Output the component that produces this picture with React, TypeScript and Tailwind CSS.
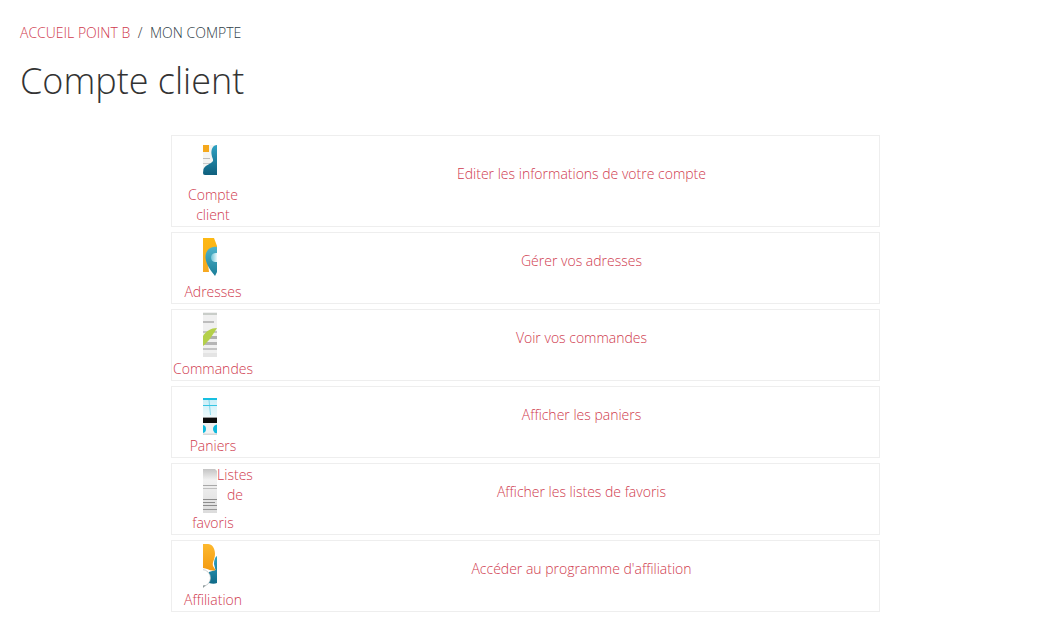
import React from 'react'

// icons are sliced to 14px wide in the page, same as the original 48px images
const IconCompte = () => (
  <svg width="14" height="48" viewBox="0 0 14 48">
    <defs>
      <linearGradient id="teal1" x1="0" y1="0" x2="0" y2="1">
        <stop offset="0" stopColor="#2fa3c4" />
        <stop offset="1" stopColor="#0f5f7d" />
      </linearGradient>
    </defs>
    <rect x="0" y="8" width="14" height="30" fill="#f4f4f2" />
    <rect x="0" y="8" width="6" height="7" fill="#f5a81c" />
    <rect x="0" y="21" width="7" height="1" fill="#bdbdbd" />
    <rect x="0" y="26" width="7" height="1" fill="#c9c9c9" />
    <path d="M14 8 C10 8 8 12 8.500 17 C9 21 10.500 22 10 24 C8 27 2 28 0.500 32 L0 36 Q0 38 2 38 H14 Z" fill="url(#teal1)" />
  </svg>
)

const IconAdresses = () => (
  <svg width="14" height="48" viewBox="0 0 14 48">
    <defs>
      <linearGradient id="or2" x1="0" y1="0" x2="0" y2="1">
        <stop offset="0" stopColor="#fdb913" />
        <stop offset="1" stopColor="#f6a821" />
      </linearGradient>
      <linearGradient id="teal2" x1="0" y1="0" x2="0" y2="1">
        <stop offset="0" stopColor="#4fb4cb" />
        <stop offset="1" stopColor="#1a7d98" />
      </linearGradient>
      <linearGradient id="glow2" x1="0" y1="0" x2="1" y2="0">
        <stop offset="0" stopColor="#6cc3d6" />
        <stop offset="1" stopColor="#e8f8fb" />
      </linearGradient>
    </defs>
    <path d="M0 4 H11 L14 12 V14 H8 L4 22 L6 38 H0 Z" fill="url(#or2)" />
    <path d="M14 13 C7 12 2 17 2.500 24 C3 31 9 38 12 42 L14 38 Z" fill="url(#teal2)" />
    <path d="M14 19 C11 18.500 8 20 8 23.500 C8 27 11 28.500 14 28 Z" fill="url(#glow2)" />
  </svg>
)

const IconCommandes = () => (
  <svg width="14" height="48" viewBox="0 0 14 48">
    <rect x="0" y="1" width="14" height="45" fill="#f0f0f0" />
    <rect x="0" y="2" width="14" height="2" fill="#c9cdc9" />
    <rect x="0" y="10" width="11" height="2" fill="#bdbdbd" />
    <rect x="0" y="20" width="14" height="2" fill="#c4c4c4" />
    <rect x="0" y="25" width="14" height="3" fill="#b0b0b0" />
    <rect x="0" y="31" width="14" height="3" fill="#b5b5b5" />
    <rect x="0" y="37" width="14" height="2" fill="#c4c4c4" />
    <rect x="0" y="42" width="14" height="4" fill="#e4e4e4" />
    <path d="M14 17 C8 17 3 20 0 25 V35 C4 32 8 27 14 17 Z" fill="#b4d04a" />
  </svg>
)

const IconPaniers = () => (
  <svg width="14" height="48" viewBox="0 0 14 48">
    <defs>
      <linearGradient id="blue4" x1="0" y1="0" x2="0" y2="1">
        <stop offset="0" stopColor="#c6eef8" />
        <stop offset="1" stopColor="#eef9fb" />
      </linearGradient>
    </defs>
    <rect x="0" y="10" width="14" height="19" fill="url(#blue4)" />
    <rect x="0" y="10" width="14" height="2" fill="#18bfe0" />
    <rect x="0" y="17" width="14" height="1" fill="#35c5e3" />
    <path d="M6 12 L7.500 27" stroke="#45c5e0" strokeWidth="0.6" />
    <rect x="0" y="29" width="14" height="1" fill="#9a9a9a" />
    <rect x="0" y="30" width="14" height="5" fill="#0c0c0c" />
    <rect x="0" y="35" width="14" height="12" fill="#f2f2f2" />
    <circle cx="-1" cy="41" r="4" fill="#10b9dc" />
    <circle cx="14.500" cy="41" r="4.500" fill="#10b9dc" />
    <rect x="0" y="45.500" width="14" height="1.500" fill="#d8d8d8" />
  </svg>
)

const IconListes = () => (
  <svg width="14" height="48" viewBox="0 0 14 48">
    <defs>
      <linearGradient id="gray5" x1="0" y1="0" x2="0" y2="1">
        <stop offset="0" stopColor="#c4c4c4" />
        <stop offset="0.25" stopColor="#f2f2f2" />
        <stop offset="1" stopColor="#dcdcdc" />
      </linearGradient>
    </defs>
    <path d="M0 4 H12 L14 6 V48 H0 Z" fill="url(#gray5)" />
    <rect x="0" y="20" width="14" height="1" fill="#a8a8a8" />
    <rect x="0" y="23" width="14" height="1" fill="#c0c0c0" />
    <rect x="0" y="34" width="14" height="1" fill="#8c8c8c" />
    <rect x="0" y="37" width="12" height="1" fill="#8c8c8c" />
    <rect x="0" y="40" width="14" height="1" fill="#8c8c8c" />
    <rect x="0" y="44" width="14" height="1" fill="#999999" />
  </svg>
)

const IconAffiliation = () => (
  <svg width="14" height="48" viewBox="0 0 14 48">
    <defs>
      <linearGradient id="teal6" x1="0" y1="0" x2="0" y2="1">
        <stop offset="0" stopColor="#2fa3c4" />
        <stop offset="1" stopColor="#0f6a88" />
      </linearGradient>
      <linearGradient id="or6" x1="0" y1="0" x2="0" y2="1">
        <stop offset="0" stopColor="#fdb92e" />
        <stop offset="1" stopColor="#f39a10" />
      </linearGradient>
    </defs>
    <path d="M14 14 C12 15 11 18 11 22 L12.500 28 L6 30 L6 41 C9 42 12 42 14 41 Z" fill="url(#teal6)" />
    <path d="M0 2 H5 C9 2 12 6 12 12 C12 17 9 20 10 24 L12.500 28 C8 30 4 26 0 26 Z" fill="url(#or6)" />
    <circle cx="-1" cy="36" r="8.500" fill="#ffffff" stroke="#aab4b6" strokeWidth="0.6" />
    <path d="M0 43.500 L3 43 L0 46 Z" fill="#8f9a9c" />
  </svg>
)

const rows = [
  { label: 'Compte client', link: 'Editer les informations de votre compte', icon: <IconCompte /> },
  { label: 'Adresses', link: 'Gérer vos adresses', icon: <IconAdresses /> },
  { label: 'Commandes', link: 'Voir vos commandes', icon: <IconCommandes /> },
  { label: 'Paniers', link: 'Afficher les paniers', icon: <IconPaniers /> },
  { label: 'Listes de favoris', link: 'Afficher les listes de favoris', icon: <IconListes /> },
  { label: 'Affiliation', link: "Accéder au programme d'affiliation", icon: <IconAffiliation /> },
]

export default function App() {
  return (
    <div className="min-h-[623px] bg-white font-['Open_Sans',sans-serif] font-light text-sm leading-5 text-[#333]">
      <div className="px-5 pt-[23px]">
        <div className="uppercase">
          <a className="text-[#cf3a4e]">Accueil Point B</a>
          <span className="mx-[7.5px]">/</span>
          <span className="text-[#2f3d47]">Mon compte</span>
        </div>
        <h1 className="mt-[13px] text-[36px] leading-[50px] font-light text-[#333]">Compte client</h1>
      </div>
      <div className="mt-[29px] ml-[171px] flex w-[709px] flex-col gap-[5px]">
        {rows.map((row) => (
          <div key={row.label} className="flex border border-[#eeeeee] p-px">
            <div className="w-20 shrink-0 text-center text-[#cf3a4e]">
              <div className="float-left flex h-12 w-11 justify-end">{row.icon}</div>
              {row.label}
            </div>
            <div className="flex flex-1 items-center justify-center pl-8 pb-[14px] text-center text-[#cf3a4e]">
              {row.link}
            </div>
          </div>
        ))}
      </div>
    </div>
  )
}
